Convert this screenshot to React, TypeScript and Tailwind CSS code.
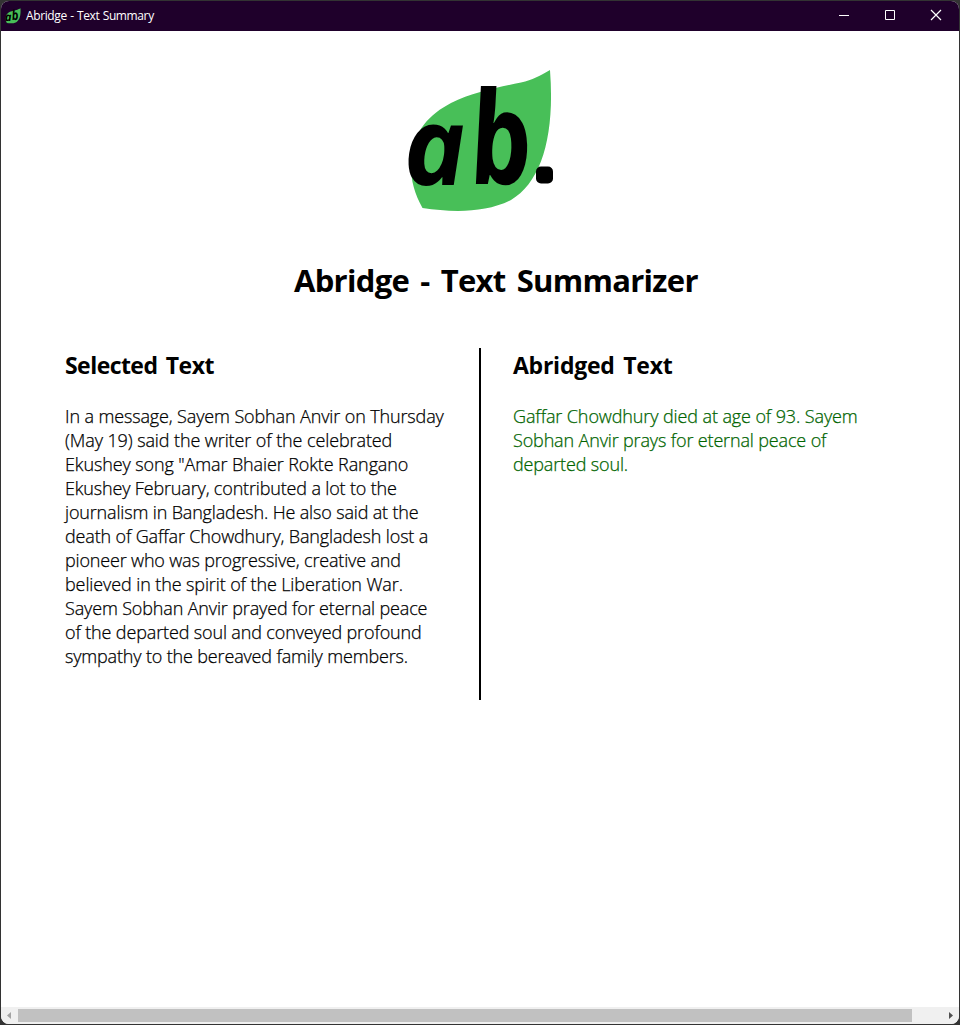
const SELECTED: [string, string][] = [
  ["In a message, Sayem Sobhan Anvir on Thursday", "tracking-[-0.13px]"],
  ["(May 19) said the writer of the celebrated", "tracking-[-0.1px]"],
  ['Ekushey song "Amar Bhaier Rokte Rangano', "tracking-[-0.11px]"],
  ["Ekushey February, contributed a lot to the", "tracking-[-0.16px]"],
  ["journalism in Bangladesh. He also said at the", "tracking-[-0.16px]"],
  ["death of Gaffar Chowdhury, Bangladesh lost a", "tracking-[-0.15px]"],
  ["pioneer who was progressive, creative and", "tracking-[-0.17px]"],
  ["believed in the spirit of the Liberation War.", "tracking-[-0.11px]"],
  ["Sayem Sobhan Anvir prayed for eternal peace", "tracking-[-0.15px]"],
  ["of the departed soul and conveyed profound", "tracking-[-0.14px]"],
  ["sympathy to the bereaved family members.", "tracking-[-0.16px]"],
];

const ABRIDGED: [string, string][] = [
  ["Gaffar Chowdhury died at age of 93. Sayem", "tracking-[-0.11px]"],
  ["Sobhan Anvir prays for eternal peace of", "tracking-[-0.15px]"],
  ["departed soul.", "tracking-[-0.15px]"],
];

function Logo({ className, dot = true }: { className: string; dot?: boolean }) {
  return (
    <svg className={`overflow-visible ${className}`} viewBox="0 0 150 150" aria-hidden="true">
      <path
        d="M145 3C134 9 128 13 116 15.500C95 20 68 25 46 36C25 47 8 64 6 92C5 111 9 126 17.500 141C48 145.500 80 146 106 133C137 115 150 68 145 3Z"
        fill="#48bf58"
      />
      <g fontFamily="'Open Sans', sans-serif" fontStyle="italic" fontWeight="700" fill="#000">
        <text transform="translate(0 118) skewX(3) scale(.97 1)" fontSize="109">a</text>
        <text transform="translate(69 117) skewX(7) scale(.82 1)" fontSize="129">b</text>
      </g>
      {dot && <rect x="131" y="99.500" width="17" height="17" rx="5" fill="#000" />}
    </svg>
  );
}

function Lines({ lines }: { lines: [string, string][] }) {
  return (
    <p className="mt-[27px] text-[18px] leading-6 font-light whitespace-nowrap [-webkit-text-stroke:0.25px_currentColor]">
      {lines.map(([text, tracking]) => (
        <span key={text} className={`block ${tracking}`}>{text}</span>
      ))}
    </p>
  );
}

export default function App() {
  return (
    <div className="h-[1025px] w-[960px] overflow-hidden bg-[#333] px-px pt-[1px] pb-[1px] font-['Open_Sans',sans-serif] text-black">
      <div className="flex h-full flex-col overflow-hidden rounded-[8px] bg-white">
        <header className="flex h-[30px] shrink-0 items-center bg-[#1f002b] pl-1 text-white">
          <Logo className="size-4" dot={false} />
          <span className="ml-[5px] text-[12px] leading-4 tracking-[-0.38px] [word-spacing:0.6px]">Abridge - Text Summary</span>
          <svg className="ml-auto h-[30px] w-[138px]" viewBox="0 0 138 30" fill="none" stroke="#fff">
            <path d="M18 14.500h10" />
            <path d="M64.500 9.500h9v9h-9z" />
            <path d="M110 9l10 10M120 9l-10 10" strokeWidth="1.200" />
          </svg>
        </header>
        <main className="flex min-h-0 flex-1 flex-col">
          <Logo className="mt-[36px] ml-[404px] size-[150px]" />
          <h1 className="mt-[39px] ml-[293px] text-[31px] leading-[48px] font-bold tracking-[-0.7px] whitespace-nowrap [word-spacing:3.800px]">Abridge - Text Summarizer</h1>
          <section className="mt-[44px] flex h-[352px]">
            <div className="w-[480px] border-r-2 border-black pt-[5px] pl-16">
              <h2 className="text-[23px] leading-6 font-bold tracking-[-0.55px] whitespace-nowrap [word-spacing:3px]">Selected Text</h2>
              <Lines lines={SELECTED} />
            </div>
            <div className="pt-[5px] pl-8">
              <h2 className="text-[23px] leading-6 font-bold tracking-[-0.25px] whitespace-nowrap [word-spacing:3px]">Abridged Text</h2>
              <div className="text-[#006400]">
                <Lines lines={ABRIDGED} />
              </div>
            </div>
          </section>
        </main>
        <footer className="flex h-[17px] shrink-0 items-center bg-[#f0f0f0]">
          <svg className="h-[17px] w-[17px]" viewBox="0 0 17 17"><path d="M10 5v7L6 8.500z" fill="#a3a3a3" /></svg>
          <div className="h-[13px] w-[894px] bg-[#c1c1c1]" />
          <svg className="ml-auto h-[17px] w-[17px]" viewBox="0 0 17 17"><path d="M7 5v7l4-3.500z" fill="#505050" /></svg>
        </footer>
      </div>
    </div>
  );
}
